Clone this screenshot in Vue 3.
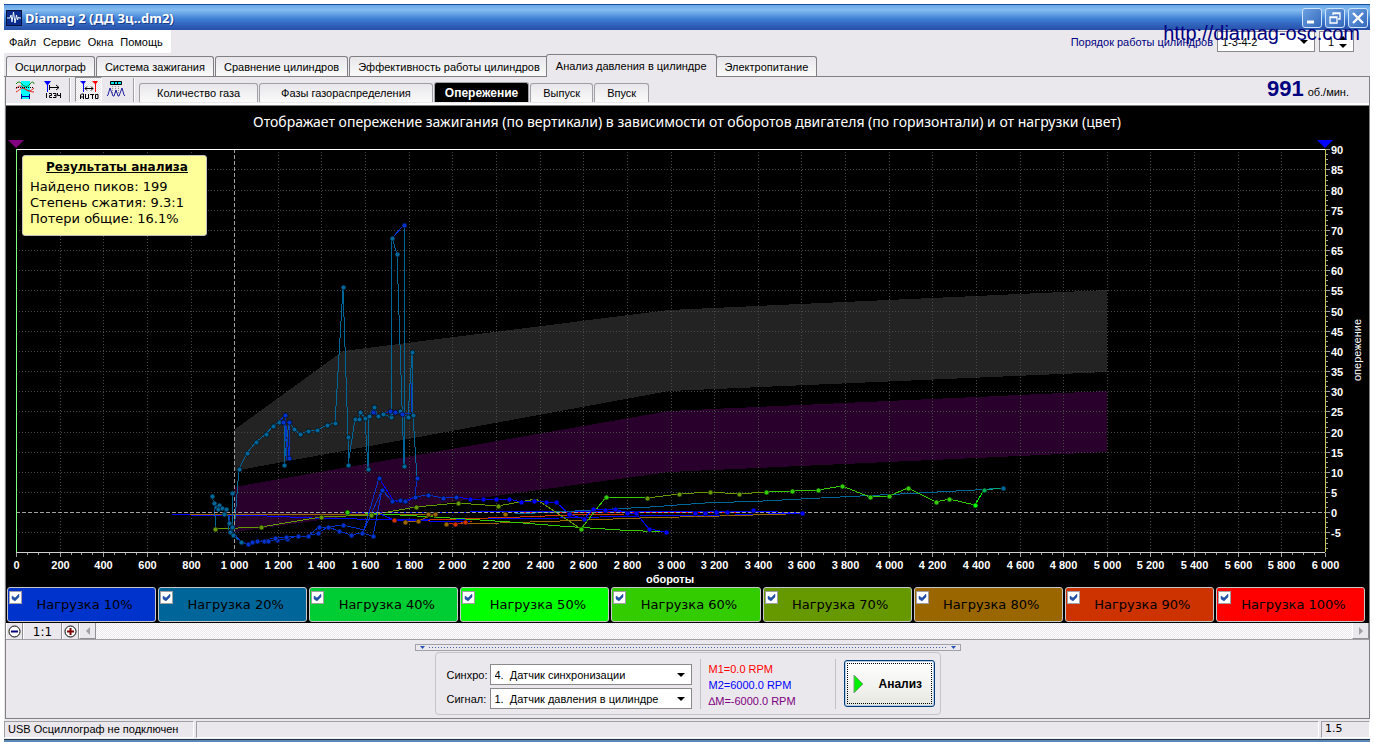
<script setup>
import { ref } from 'vue'

const menus = ['Файл', 'Сервис', 'Окна', 'Помощь']
const tabs = [
  'Осциллограф',
  'Система зажигания',
  'Сравнение цилиндров',
  'Эффективность работы цилиндров',
  'Анализ давления в цилиндре',
  'Электропитание',
]
const activeTab = ref(4)
const subTabs = [
  { name: 'Количество газа', size: 'wide' },
  { name: 'Фазы газораспределения', size: 'wider' },
  { name: 'Опережение' },
  { name: 'Выпуск' },
  { name: 'Впуск' },
]
const activeSub = ref(2)

const loads = ref([
  { pct: 10, color: '#0033cc', on: true },
  { pct: 20, color: '#006699', on: true },
  { pct: 40, color: '#00cc33', on: true },
  { pct: 50, color: '#00ff00', on: true },
  { pct: 60, color: '#33cc00', on: true },
  { pct: 70, color: '#669900', on: true },
  { pct: 80, color: '#996600', on: true },
  { pct: 90, color: '#cc3300', on: true },
  { pct: 100, color: '#ff0000', on: true },
])

const left = 16
const right = 1325
const top = 149
const bottom = 552
const px = (rpm) => Math.round(left + (rpm * (right - left)) / 6000) + 0.5
const py = (deg) => Math.round(512.3 - deg * 4.033) + 0.5

const xMajor = Array.from({ length: 31 }, (_, i) => i * 200)
const xMinor = Array.from({ length: 121 }, (_, i) => i * 50)
const yMajor = Array.from({ length: 20 }, (_, i) => i * 5 - 5)
const yMinor = Array.from({ length: 80 }, (_, i) => i * 1.25 - 8.75)
const spaced = (n) => (n < 1000 ? String(n) : `${Math.floor(n / 1000)} ${String(n % 1000).padStart(3, '0')}`)

const lines = [
  { c: '#0000ff', p: '172,514 190,515 267,516 312,518 402,520 470,519 560,518 640,516 735,515 802,513 753,511 655,511 470,512 350,513' },
  { c: '#996600', p: '190,514 377,514 428,514 435,514 418,521 405,522' },
  { c: '#996600', p: '446,524 500,523 560,521 640,518 720,516 787,514' },
  { c: '#cc3300', p: '394,520 405,521 456,519 520,517 570,515 625,514' },
  { c: '#cc3300', p: '446,523 456,524 472,521' },
  { c: '#ff0000', p: '520,512 625,513 736,512' },
  { c: '#33cc00', p: '347,512 400,515 450,518 510,522 560,526 620,530 666,532' },
  { c: '#0000ff', p: '347,512 378,513 394,520 428,521 470,522' },
  { c: '#006699', p: '515,514 575,511 650,507 705,503 763,501 840,497 900,494 975,490 1003,488' },
  { c: '#669900', p: '215,529 261,527 321,517 371,515 416,507 458,503 498,506 536,499 581,529' },
  { c: '#33cc00', p: '581,529 606,497 647,498' },
  { c: '#669900', p: '647,498 679,494 710,492 739,494 766,492' },
  { c: '#33cc00', p: '766,492 792,491 818,490 842,486 870,497 889,496 908,488 936,502 949,499 975,505' },
  { c: '#00ff00', p: '975,505 984,490' },
  { c: '#00aa77', p: '984,490 1003,488' },
  { c: '#006699', p: '210,495 212,496 214,503 216,507 219,505 222,508 226,509 224,514 228,516 228,527 230,533 232,527 232,493 233,535 241,542' },
  { c: '#006699', p: '214,503 216,528' },
  { c: '#0033cc', p: '229,516 231,530 234,533 241,542 248,544 252,542 257,541 264,541 268,541 277,540 287,539 298,536 308,536 318,533 328,527 339,531 351,535 362,533 364,530 382,490 392,501 400,500 405,501 415,497 428,495 443,498 456,497' },
  { c: '#0033cc', p: '308,536 319,527 328,527 343,525 364,530 379,478' },
  { c: '#0033cc', p: '252,543 275,538 298,536' },
  { c: '#0000ff', p: '379,478 393,500 402,503 415,497' },
  { c: '#0033cc', p: '362,533 373,536 382,490' },
  { c: '#006699', p: '234,532 239,469 247,453 256,442 266,434 273,426 279,422 285,422 284,465 289,422 294,429 300,434 308,431 317,430 327,425 335,423 343,287 348,437 348,465 355,419 359,419 360,412 365,418 368,469 369,416 374,407 378,416 383,414 391,417 392,238 397,254 404,466 404,225' },
  { c: '#006699', p: '391,413 400,411 408,417 412,352 413,415 417,478' },
  { c: '#0033cc', p: '279,422 285,415 289,458 289,422 285,422 287,460' },
  { c: '#0033cc', p: '392,238 404,225' },
  { c: '#0033cc', p: '369,416 373,412 378,416 390,411 395,412 402,414 411,413 412,383' },
  { c: '#0033cc', p: '417,478 415,497' },
  { c: '#0000ff', p: '456,497 470,499 483,499 496,499 509,499 521,502 534,501 546,502 556,502 569,514 584,519 593,509 605,510 615,509 627,513 636,513 649,529 666,532' },
]

const dots = [
  { c: '#006699', p: '212,496 214,503 216,507 219,505 218,509 222,508 226,509 224,514 229,523 232,527 230,532 232,493 233,535 241,542 239,469 247,453 256,442 266,434 273,426 279,422 284,465 294,429 300,434 308,431 317,430 327,425 335,423 343,287 348,437 348,465 355,419 359,419 360,412 365,418 368,469 369,416 374,407 378,416 383,414 391,417 391,413 400,411 408,417 413,415 412,352 404,466 392,238 397,254 1003,488' },
  { c: '#0033cc', p: '285,415 283,422 289,422 289,458 373,412 390,411 395,412 402,414 404,225 417,478 415,497 248,544 252,542 257,541 264,541 268,541 277,540 275,538 287,539 286,537 298,536 308,536 318,533 319,527 328,527 339,531 343,525 351,535 362,533 373,536 379,478 382,490 392,501 400,500 405,501 428,495 443,498 456,497' },
  { c: '#0000ff', p: '470,499 483,499 496,499 509,499 521,502 534,501 546,502 556,502 569,514 584,519 593,509 605,510 615,509 627,513 636,513 649,529 666,532 695,513 705,513 716,512 727,512 753,510 802,513' },
  { c: '#669900', p: '215,529 261,527 321,517 371,515 416,507 458,503 498,506 647,498 679,494 710,492 739,494' },
  { c: '#33cc00', p: '347,512 581,529 606,497 766,492 792,491 818,490 842,486 870,497 889,496 908,488 936,502 949,499' },
  { c: '#00ff00', p: '975,505' },
  { c: '#00aa55', p: '984,490' },
  { c: '#996600', p: '405,522 418,521 428,514 435,514 446,524 505,514' },
  { c: '#cc3300', p: '394,520 455,524 465,522' },
].flatMap((g) => g.p.split(' ').map((s) => ({ c: g.c, x: +s.split(',')[0] + 0.5, y: +s.split(',')[1] + 0.5 })))

const sources = ['4.\u00a0 Датчик синхронизации', '1.\u00a0 Датчик давления в цилиндре']
const sync = ref(0)
const signal = ref(1)
const order = ref('1-3-4-2')
const cylinder = ref('1')
</script>

<template>
  <div class="window">
    <header class="title">
      <svg class="app-icon" viewBox="0 0 16 16" aria-hidden="true">
        <rect x="0.5" y="0.5" width="15" height="15" fill="#0a2c8c" stroke="#06103c" />
        <path d="M1 8h3l1-3 1 7 1.500-10 1.500 11 1.500-8 1 5 1-3 .5 1H15" fill="none" stroke="#e8f4ff" />
      </svg>
      <h1>Diamag 2 (ДД 3ц..dm2)</h1>
      <button class="win-btn" aria-label="Свернуть"><svg viewBox="0 0 18 18"><path d="M4 13h7" stroke="#fff" stroke-width="3" /></svg></button>
      <button class="win-btn" aria-label="Развернуть"><svg viewBox="0 0 18 18"><path d="M7 6V4h7v6h-2M7 4.500h7M4 8h7v6H4zM4 8.500h7" fill="none" stroke="#fff" stroke-width="1.300" /></svg></button>
      <button class="win-btn" aria-label="Закрыть"><svg viewBox="0 0 18 18"><path d="M4 4l10 10M14 4L4 14" stroke="#fff" stroke-width="2.300" /></svg></button>
    </header>

    <div class="menu-row">
      <nav class="menu"><button v-for="m in menus" :key="m">{{ m }}</button></nav>
      <div class="order">
        <label for="order">Порядок работы цилиндров</label>
        <span class="drop order-drop">
          <select id="order" v-model="order"><option>1-3-4-2</option></select>
          <svg viewBox="0 0 8 4"><path d="M0 0h8L4 4z" /></svg>
        </span>
        <span class="drop spin">
          <input v-model="cylinder" aria-label="Цилиндр" />
          <svg viewBox="0 0 8 12"><path d="M0 4h8L4 0zM0 8h8l-4 4z" /></svg>
        </span>
      </div>
      <a class="site" href="http://diamag-osc.com">http://diamag-osc.com</a>
    </div>

    <nav class="tabs">
      <button v-for="(t, i) in tabs" :key="t" class="tab" :class="{ active: i === activeTab }" @click="activeTab = i">{{ t }}</button>
    </nav>

    <main class="sheet">
      <div class="toolbar">
        <button class="tool" aria-label="Сигнал">
          <svg viewBox="0 0 20 20">
            <path d="M6 1h9v18H6z" fill="#00ffff" />
            <path d="M1 4c3-4 5-1 7 1s5 2 7-1 4-2 4 0" fill="none" stroke="#008000" />
            <path d="M1 9c3-5 6-3 9 0s6 2 9-1M1 12c4-2 5-5 9-3s6 3 9 3" fill="none" stroke="#e02020" />
            <path d="M1 7.500h18" stroke="#000" stroke-dasharray="1 1" />
            <path d="M6 16.500h9M6.500 14v5M14.500 14v5" stroke="#0000a0" fill="none" />
          </svg>
        </button>
        <button class="tool" aria-label="Нумерация">
          <svg viewBox="0 0 20 20">
            <path d="M2 1h7L6 5v7H5V5z" fill="#0000ff" />
            <path d="M7 7.500h10M14 5l3 2.500L14 10M7.500 5v5" fill="none" stroke="#000" />
            <path d="M4.500 13v5M7 13.500h2.500v2H7.500v2H10M11 13.500h3v4h-3M12 15.500h2M15.500 13v2.500h3M18.500 13v5" fill="none" stroke="#000" />
          </svg>
        </button>
        <i class="sep"></i>
        <button class="tool pressed" aria-label="Авто">
          <svg viewBox="0 0 20 20">
            <path d="M1 1h6L5 4v8H4V4z" fill="#0000ff" />
            <path d="M13 1h6l-2 3v8h-1V4z" fill="#ff0000" />
            <path d="M6 8.500h8M8 6.500l-2 2 2 2M12 6.500l2 2-2 2" fill="none" stroke="#000" />
            <path d="M1.500 19v-4l1-1h2v5M1.500 17h3M6.500 14v4.500h3V14M11 14.500h4M13.500 14.500V19M16.500 14.500h2.500v4h-2.500z" fill="none" stroke="#000" />
          </svg>
        </button>
        <button class="tool" aria-label="Пики">
          <svg viewBox="0 0 20 20">
            <path d="M4.500 1.500h11v3h-11z" fill="#00e8e8" stroke="#000" />
            <path d="M8.500 2v2M11.500 2v2" stroke="#000" />
            <path d="M6.500 6v8M9.500 6v8M12.500 6v8" stroke="#909090" stroke-dasharray="1 1" />
            <path d="M1 16l1-1 2-7 3 8 1 0 2-6 2 6 1 0 3-8 2 7 1 1" fill="none" stroke="#2020a0" />
          </svg>
        </button>
        <i class="sep"></i>
        <nav class="sub-tabs">
          <button v-for="(s, i) in subTabs" :key="s.name" class="sub" :class="[s.size, { active: i === activeSub }]" @click="activeSub = i">{{ s.name }}</button>
        </nav>
        <p class="rpm"><strong>991</strong> об./мин.</p>
      </div>

      <section class="plot">
        <svg class="chart" viewBox="6 106 1363 481" role="img" aria-label="Опережение зажигания">
          <text class="caption" x="687" y="127" text-anchor="middle">Отображает опережение зажигания (по вертикали) в зависимости от оборотов двигателя (по горизонтали) и от нагрузки (цвет)</text>
          <g shape-rendering="crispEdges">
            <path d="M234 430L343 351L669 310L1107 290V372L669 391L234 471z" fill="#232323" />
            <path d="M234 487L669 411L1107 391V452L669 472L234 532z" fill="#29002b" />
            <g stroke="#484848" stroke-dasharray="1 2">
              <path v-for="x in xMajor.slice(1, -1)" :key="x" :d="`M${px(x)} ${top}V${bottom}`" />
              <path v-for="y in yMajor.slice(0, -1)" :key="y" :d="`M${left} ${py(y)}H${right}`" />
            </g>
            <polyline v-for="(l, i) in lines" :key="i" :points="l.p" :stroke="l.c" fill="none" />
            <path :d="`M${px(1000)} ${top}V${bottom}M${left} ${py(0)}H${right}`" stroke="#a0a0a0" stroke-dasharray="4 2" />
          </g>
          <circle v-for="(d, i) in dots" :key="i" :cx="d.x" :cy="d.y" r="2.500" :fill="d.c" stroke="#000" stroke-width="0.600" />
          <g shape-rendering="crispEdges">
            <path :d="`M${left} 149.500H${right + 5}`" stroke="#fff" />
            <path :d="`M16.500 ${top}V${bottom}`" stroke="#80ff80" />
            <path :d="`M1325.500 ${top}V${bottom}`" stroke="#c8c850" />
            <path :d="`M${left} 552.500H${right}`" stroke="#d0d0d0" />
            <path v-for="x in xMinor" :key="x" :d="`M${px(x)} 553v${x % 200 ? 2 : 4}`" stroke="#a0a0a0" />
            <path v-for="y in yMinor" :key="y" :d="`M1326 ${py(y)}h${y % 5 ? 2 : 4}`" stroke="#a0a0a0" />
          </g>
          <g class="ticks">
            <text v-for="x in xMajor" :key="x" :x="px(x)" y="569" text-anchor="middle">{{ spaced(x) }}</text>
            <text v-for="y in yMajor" :key="y" x="1331" :y="py(y) + 4">{{ y }}</text>
            <text x="670" y="583" text-anchor="middle">обороты</text>
            <text class="axis" transform="translate(1361 350) rotate(-90)" text-anchor="middle">опережение</text>
          </g>
          <path d="M8 140h16l-8 8z" fill="#800080" />
          <path d="M1317 140h16l-8 8z" fill="#0000ff" />
        </svg>
        <aside class="results">
          <h2>Результаты анализа</h2>
          <p>Найдено пиков: 199</p>
          <p>Степень сжатия: 9.3:1</p>
          <p>Потери общие: 16.1%</p>
        </aside>
        <div class="loads">
          <label v-for="l in loads" :key="l.pct" class="load" :style="{ background: l.color }">
            <input v-model="l.on" type="checkbox" />
            <svg v-if="l.on" class="check" viewBox="0 0 9 9"><path d="M1 3l3 2 4-4v3L4 8 1 6z" fill="#2050a8" stroke="#2050a8" stroke-width="0.500" /></svg>
            <span>Нагрузка {{ l.pct }}%</span>
          </label>
        </div>
      </section>

      <div class="scroll">
        <button class="zoom" aria-label="Уменьшить"><svg viewBox="0 0 13 13"><circle cx="6.500" cy="6.500" r="5.500" fill="#fff" stroke="#000" /><path d="M3 6.500h7" stroke="#000080" stroke-width="2" /></svg></button>
        <button class="ratio">1:1</button>
        <button class="zoom" aria-label="Увеличить"><svg viewBox="0 0 13 13"><circle cx="6.500" cy="6.500" r="5.500" fill="#fff" stroke="#000" /><path d="M3 6.500h7M6.500 3v7" stroke="#800000" stroke-width="2" /></svg></button>
        <button class="arrow" aria-label="Влево"><svg viewBox="0 0 8 8"><path d="M6 0v8L2 4z" fill="#a0a0a4" /></svg></button>
        <span class="track"></span>
        <button class="arrow" aria-label="Вправо"><svg viewBox="0 0 8 8"><path d="M2 0v8l4-4z" fill="#a0a0a4" /></svg></button>
      </div>

      <div class="panel">
        <div class="splitter">
          <svg viewBox="0 0 5 3"><path d="M0 0h5L2.500 3z" fill="#2050b0" /></svg>
          <i></i>
          <svg viewBox="0 0 5 3"><path d="M0 0h5L2.500 3z" fill="#2050b0" /></svg>
        </div>
        <div class="group">
          <div class="sources">
            <label for="sync">Синхро:</label>
            <span class="drop">
              <select id="sync" v-model="sync"><option v-for="(s, i) in sources" :key="s" :value="i">{{ s }}</option></select>
              <svg viewBox="0 0 8 4"><path d="M0 0h8L4 4z" /></svg>
            </span>
            <label for="signal">Сигнал:</label>
            <span class="drop">
              <select id="signal" v-model="signal"><option v-for="(s, i) in sources" :key="s" :value="i">{{ s }}</option></select>
              <svg viewBox="0 0 8 4"><path d="M0 0h8L4 4z" /></svg>
            </span>
          </div>
          <div class="markers">
            <p class="m1">M1=0.0 RPM</p>
            <p class="m2">M2=6000.0 RPM</p>
            <p class="dm">∆M=-6000.0 RPM</p>
          </div>
          <button class="run">
            <svg viewBox="0 0 12 20"><path d="M1 1v18l9-9z" fill="#00f000" stroke="#80a080" /></svg>
            Анализ
          </button>
        </div>
      </div>
    </main>

    <footer class="status">
      <span class="cell usb">USB Осциллограф не подключен</span>
      <span class="cell grow"></span>
      <span class="cell version">1.5</span>
    </footer>
    <div class="edge"></div>
  </div>
</template>

<style>
body {
  background: #fff;
}
</style>

<style scoped>
.window {
  margin: 4px 4px 0;
  background: #ebe8ed;
  font: 11px/14px "Liberation Sans", Arial, sans-serif;
  color: #000;
}
.window * {
  box-sizing: border-box;
}
button,
select,
input {
  font: inherit;
  color: inherit;
  margin: 0;
  padding: 0;
  border: 0;
  border-radius: 0;
  background: none;
}
h1,
h2,
p {
  margin: 0;
}
svg {
  display: block;
}
.title {
  display: flex;
  align-items: center;
  gap: 3px;
  height: 26px;
  padding: 0 2px;
  border-top: 1px solid #1c4ea0;
  background: linear-gradient(#6aa6e6, #84bcf0 20%, #3f80d4 55%, #2f62bc 80%, #2850a8);
  color: #fff;
}
.app-icon {
  width: 16px;
  height: 16px;
}
h1 {
  flex: 1;
  font: bold 13px/20px "Noto Sans", "Open Sans", sans-serif;
  text-shadow: 1px 1px #1a3c8c;
}
.win-btn {
  width: 20px;
  height: 20px;
  border: 1px solid #d0e4fa;
  border-radius: 3px;
  background: linear-gradient(135deg, #6ba0e0, #3468bc);
}
.win-btn svg {
  width: 18px;
  height: 18px;
}
.menu-row {
  display: flex;
  justify-content: space-between;
  align-items: flex-start;
  position: relative;
  height: 23px;
}
.menu {
  display: flex;
  gap: 7px;
  height: 23px;
  padding: 0 8px 0 5px;
  background: #fff;
}
.order {
  display: flex;
  align-items: center;
  gap: 4px;
  height: 23px;
  padding-right: 16px;
  color: #000080;
}
.drop {
  display: block;
  position: relative;
  height: 21px;
  border: 1px solid #8a8a8e;
  background: #fff;
  color: #000;
}
.drop select,
.drop input {
  display: block;
  width: 100%;
  height: 100%;
  padding: 0 4px;
  appearance: none;
  outline: 0;
}
.drop svg {
  position: absolute;
  right: 6px;
  top: 8px;
  width: 8px;
  height: 4px;
  pointer-events: none;
}
.order-drop {
  width: 98px;
}
.spin {
  width: 35px;
}
.spin input {
  padding-left: 8px;
}
.spin svg {
  top: 4px;
  height: 12px;
}
.site {
  position: absolute;
  right: 10px;
  top: -8px;
  font-size: 20px;
  line-height: 22px;
  color: #000080;
  text-decoration: none;
}
.tabs {
  display: flex;
  align-items: flex-end;
  gap: 1px;
  height: 24px;
  padding-left: 2px;
  border-bottom: 1px solid #808084;
}
.tab {
  height: 20px;
  padding: 0 8px;
  border: 1px solid #808084;
  border-bottom: 0;
  border-radius: 3px 3px 0 0;
  background: linear-gradient(#e8e6ea, #fafafa);
}
.tab.active {
  height: 23px;
  margin: 0 -2px -1px -4px;
  padding: 0 9px;
  background: #ebe8ed;
}
.sheet {
  border: 1px solid #808084;
  border-top: 0;
  margin-left: 1px;
}
.toolbar {
  display: flex;
  align-items: flex-end;
  height: 29px;
  border-bottom: 1px solid #808084;
  box-shadow: inset 0 -2px #fff;
  padding: 0 20px 3px 5px;
}
.tool {
  display: grid;
  place-items: center;
  width: 27px;
  height: 25px;
}
.tool svg {
  width: 20px;
  height: 20px;
}
.tool.pressed {
  border: 1px solid;
  border-color: #909094 #fff #fff #909094;
  background: repeating-conic-gradient(#fff 0 25%, #e4e2e6 0 50%) 0 0 / 2px 2px;
}
.sep {
  width: 2px;
  height: 24px;
  margin: 0 4px;
  border-left: 1px solid #a0a0a4;
  background: #fff;
}
.sub-tabs {
  display: flex;
  align-items: flex-end;
  flex: 1;
  gap: 1px;
}
.sub {
  height: 19px;
  padding: 0 12px;
  border: 1px solid #a0a0a4;
  border-bottom: 0;
  border-radius: 3px 3px 0 0;
  background: linear-gradient(#e8e6ea, #fafafa);
}
.sub.wide {
  padding: 0 17px;
}
.sub.wider {
  padding: 0 21px;
}
.sub.active {
  height: 20px;
  padding: 0 10px;
  background: #000;
  color: #fff;
  font-weight: bold;
  font-size: 12px;
}
.rpm {
  display: flex;
  align-items: baseline;
  gap: 4px;
  line-height: 20px;
}
.rpm strong {
  font-size: 22px;
  line-height: 20px;
  color: #000080;
}
.plot {
  position: relative;
  background: #000;
  padding-bottom: 1px;
}
.chart {
  width: 100%;
  height: auto;
}
.chart text {
  fill: #fff;
}
.caption {
  font: 14px "Noto Sans", "Open Sans", sans-serif;
}
.ticks {
  font: bold 11px "Liberation Sans", Arial, sans-serif;
}
.axis {
  font-weight: normal;
}
.results {
  position: absolute;
  left: 16px;
  top: 49px;
  padding: 3px 18px 8px 7px;
  border: 1px solid #c0c0c0;
  border-radius: 3px;
  background: #ffff99;
  font: 13px/16px "DejaVu Sans", Verdana, sans-serif;
}
.results h2 {
  margin: 0 0 4px 16px;
  font: bold 12px/16px "DejaVu Sans", Verdana, sans-serif;
  text-decoration: underline;
}
.loads {
  display: grid;
  grid-template-columns: repeat(9, 1fr);
  gap: 2px;
  padding: 0 4px 0 1px;
}
.load {
  display: flex;
  align-items: center;
  justify-content: center;
  position: relative;
  height: 35px;
  padding-left: 6px;
  border: 1px solid #c8c8c8;
  border-radius: 3px;
  font: 13px/16px "DejaVu Sans", Verdana, sans-serif;
}
.load input {
  position: absolute;
  left: 1px;
  top: 3px;
  width: 13px;
  height: 13px;
  appearance: none;
  border: 1px solid #a0a0a4;
  background: #fff;
}
.check {
  position: absolute;
  left: 3px;
  top: 5px;
  width: 9px;
  height: 9px;
}
.scroll {
  display: flex;
  height: 17px;
  border-bottom: 1px solid #a0a0a4;
}
.zoom,
.arrow {
  display: grid;
  place-items: center;
  width: 17px;
  border-right: 1px solid #909094;
  border-left: 1px solid #fff;
}
.zoom svg {
  width: 13px;
  height: 13px;
}
.arrow {
  border-bottom: 1px solid #909094;
}
.arrow svg {
  width: 8px;
  height: 8px;
}
.ratio {
  width: 39px;
  border-right: 1px solid #909094;
  border-left: 1px solid #fff;
  font: 12px/18px "DejaVu Sans", Verdana, sans-serif;
}
.track {
  flex: 1;
  background: repeating-conic-gradient(#fff 0 25%, #ebe8ed 0 50%) 0 0 / 2px 2px;
}
.panel {
  display: flex;
  flex-direction: column;
  align-items: center;
  padding: 4px 0 3px;
}
.splitter {
  display: flex;
  align-items: center;
  gap: 4px;
  width: 546px;
  height: 7px;
  padding: 0 4px;
  border: 1px solid #a0a0a8;
}
.splitter svg {
  width: 5px;
  height: 3px;
}
.splitter i {
  flex: 1;
  height: 1px;
  background: repeating-linear-gradient(90deg, #4060a8 0 1px, #ebe8ed 1px 3px);
}
.group {
  display: flex;
  align-items: center;
  gap: 8px;
  height: 63px;
  margin-top: 1px;
  padding: 0 5px 0 11px;
  border: 1px solid #c4c4c8;
  border-radius: 4px;
}
.sources {
  display: grid;
  grid-template-columns: 39px 202px;
  align-items: center;
  gap: 3px 4px;
  padding-top: 6px;
}
.markers {
  width: 136px;
  height: 50px;
  padding: 2px 0 0 8px;
  border: 1px solid #c0c0c4;
  border-width: 0 1px;
  line-height: 16px;
}
.m1 {
  color: #f00;
}
.m2 {
  color: #00f;
}
.dm {
  color: #800080;
}
.run {
  display: flex;
  align-items: center;
  gap: 14px;
  width: 91px;
  height: 47px;
  padding-left: 8px;
  border: 1px solid #003c74;
  border-radius: 3px;
  background: linear-gradient(#fff, #e8e8e2);
  box-shadow: inset 0 0 0 1px #b8ccec;
  outline: 1px dotted #000;
  outline-offset: -4px;
  font-weight: bold;
  font-size: 12px;
}
.run svg {
  width: 12px;
  height: 20px;
}
.status {
  display: flex;
  gap: 2px;
  padding: 2px 0 1px;
}
.cell {
  height: 17px;
  padding-left: 3px;
  border: 1px solid;
  border-color: #a0a0a4 #fff #fff #a0a0a4;
}
.usb {
  width: 190px;
}
.grow {
  flex: 1;
}
.version {
  width: 49px;
  font-family: "DejaVu Sans", Verdana, sans-serif;
}
.edge {
  height: 4px;
  border-top: 1px solid #203848;
  background: #5c88b8;
}
</style>
